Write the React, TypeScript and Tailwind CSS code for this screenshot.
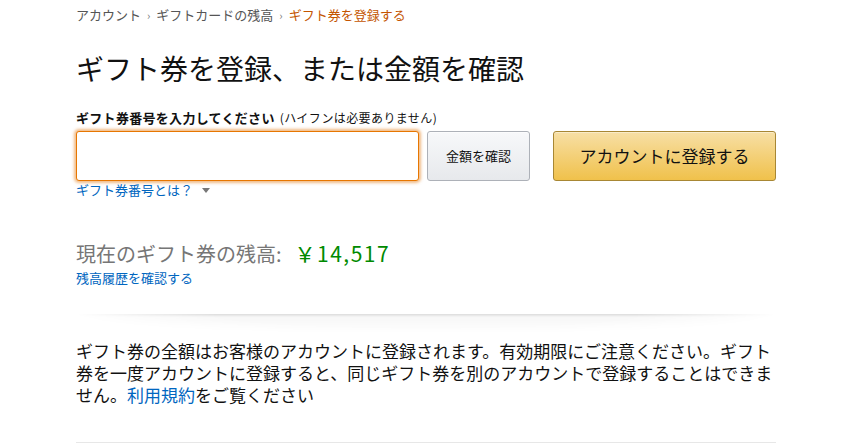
const font = "font-['Noto_Sans_CJK_JP','Noto_Sans',sans-serif]"

const Breadcrumb = () => (
  <div className="flex items-center text-[13px] leading-[18px] text-[#555]">
    <span>アカウント</span>
    <span className="mx-[6px] text-[11px] text-[#777]">›</span>
    <span>ギフトカードの残高</span>
    <span className="mx-[6px] text-[11px] text-[#777]">›</span>
    <span className="text-[#c45500]">ギフト券を登録する</span>
  </div>
)

const ClaimForm = () => (
  <div>
    <div className="text-[13px] leading-[18px] text-[#111]">
      <span className="font-bold tracking-[0.3px]">ギフト券番号を入力してください</span>
      <span className="ml-[5px] text-[12px] tracking-[0.4px]">(ハイフンは必要ありません)</span>
    </div>
    <div className="mt-[4px] flex h-[50px] items-stretch">
      <input
        className="w-[343px] rounded-[3px] border border-[#e77600] bg-white px-2 text-[17px] shadow-[0_0_3px_2px_rgba(228,121,17,0.5)] outline-none"
        type="text"
      />
      <button className="ml-[8px] w-[103px] rounded-[3px] border border-[#adb1b8] bg-[linear-gradient(to_bottom,#f7f8fa,#e7e9ec)] text-[13px] text-[#111] shadow-[0_1px_0_rgba(255,255,255,0.6)_inset]">
        金額を確認
      </button>
      <button className="ml-auto w-[223px] rounded-[3px] border border-[#a88734] bg-[linear-gradient(to_bottom,#f7dfa5,#f0c14b)] text-[17px] text-[#111] shadow-[0_1px_0_rgba(255,255,255,0.4)_inset]">
        アカウントに登録する
      </button>
    </div>
    <div className="flex items-center text-[13px] leading-[18px] text-[#0066c0]">
      <span>ギフト券番号とは？</span>
      <svg className="ml-[9px] mt-[1px]" width="8" height="5" viewBox="0 0 8 5">
        <path d="M0 0h8L4 5z" fill="#777" />
      </svg>
    </div>
  </div>
)

const Balance = () => (
  <div className="mt-[40px]">
    <div className="flex items-baseline text-[20px] leading-[28px]">
      <span className="text-[#767676]">現在のギフト券の残高:</span>
      <span className="ml-[13px] text-[21px] tracking-[1.5px] text-[#008a00]">￥14,517</span>
    </div>
    <div className="mt-[1px] text-[13px] leading-[18px] text-[#0066c0]">
      残高履歴を確認する
    </div>
  </div>
)

const SectionDivider = () => (
  <div className="mt-[27px] h-[22px] bg-[linear-gradient(to_bottom,rgba(0,0,0,0.14),rgba(0,0,0,0.03)_3px,transparent)] [mask-image:radial-gradient(ellipse_50%_100%_at_50%_0%,black_60%,transparent_100%)]" />
)

export default function App() {
  return (
    <div className={`h-[443px] w-[868px] overflow-hidden bg-white ${font}`}>
      <div className="ml-[76px] w-[700px] pt-[6px]">
        <Breadcrumb />
        <h1 className="mt-[26px] text-[28px] font-normal leading-[36px] text-[#111]">
          ギフト券を登録、または金額を確認
        </h1>
        <div className="mt-[23px]">
          <ClaimForm />
        </div>
        <Balance />
        <SectionDivider />
        <p className="mt-[4px] text-[17px] leading-[22px] text-[#111]">
          ギフト券の全額はお客様のアカウントに登録されます。有効期限にご注意ください。ギフト券を一度アカウントに登録すると、同じギフト券を別のアカウントで登録することはできません。
          <span className="text-[#0066c0]">利用規約</span>をご覧ください
        </p>
        <div className="mt-[36px] h-px bg-[#e7e7e7]" />
      </div>
    </div>
  )
}
